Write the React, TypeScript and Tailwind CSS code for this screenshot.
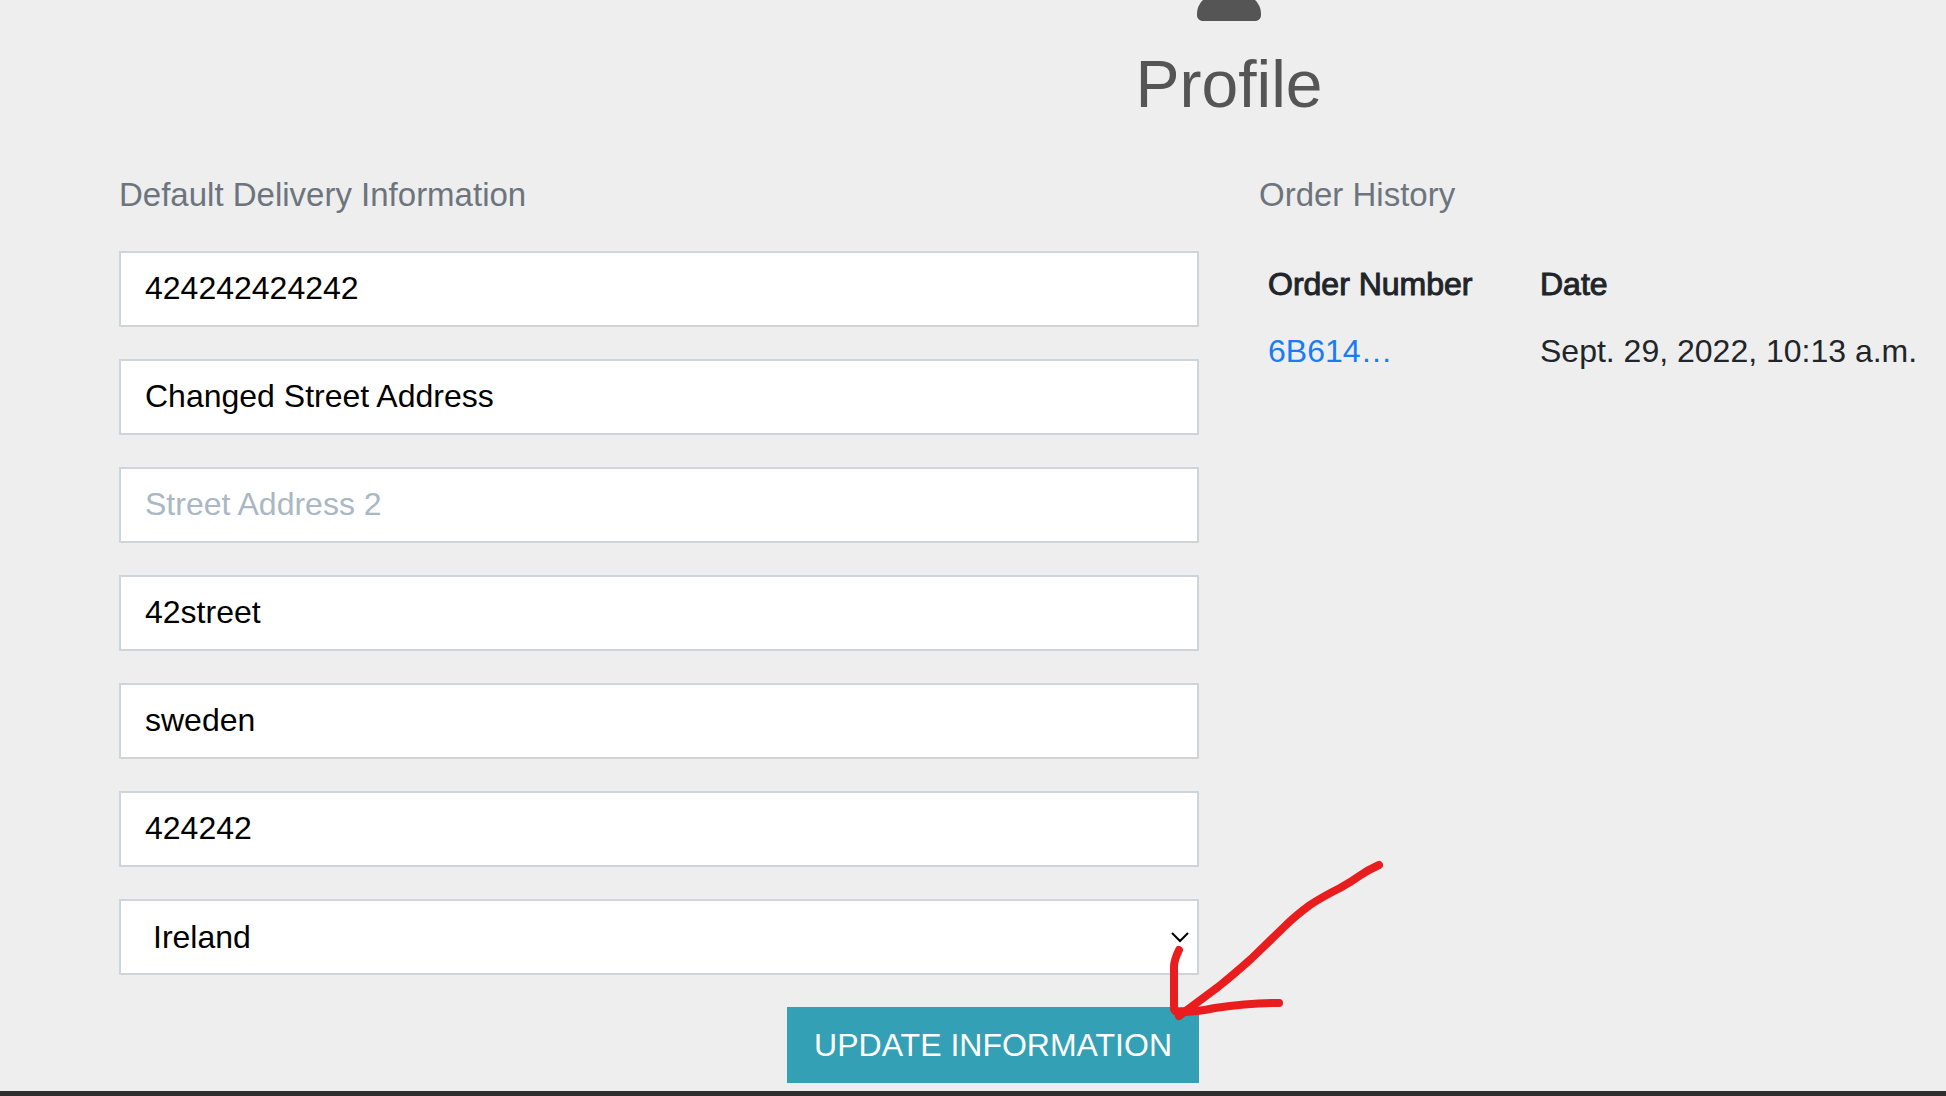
import React from "react";

const fields = [
  { label: "Phone Number", value: "424242424242" },
  { label: "Street Address 1", value: "Changed Street Address" },
  { label: "Street Address 2", value: "" },
  { label: "Town or City", value: "42street" },
  { label: "County", value: "sweden" },
  { label: "Postal Code", value: "424242" },
];

const orders = [{ number: "6B614…", date: "Sept. 29, 2022, 10:13 a.m." }];

function UserIcon() {
  return (
    <svg className="block h-[21px] w-16" viewBox="0 0 64 21" aria-hidden="true">
      <path
        d="M0 14C0 8 2.500 3.500 6 0H58C61.500 3.500 64 8 64 14V15C64 18.500 61.500 21 58 21H6C2.500 21 0 18.500 0 15Z"
        fill="#555555"
      />
    </svg>
  );
}

function Arrow() {
  return (
    <svg
      className="pointer-events-none absolute right-[-200px] bottom-14 h-[180px] w-[240px]"
      viewBox="1159 847 240 180"
      fill="none"
      stroke="#e91d1d"
      strokeWidth="8"
      strokeLinecap="round"
      strokeLinejoin="round"
      aria-hidden="true"
    >
      <path d="M1379 865Q1368 870 1360 875.500Q1351 882 1340 888Q1322 897 1310 905Q1295 916 1284 927L1251 959Q1233 975 1218 987L1179 1016" />
      <path d="M1179 950Q1174 960 1174 967V1009Q1175 1012 1179 1012Q1197 1012 1215 1008Q1249 1003 1279 1003" />
    </svg>
  );
}

function DeliveryForm() {
  return (
    <section>
      <h2 className="text-[33px] leading-[48px] text-[#6c757d]">Default Delivery Information</h2>
      <form className="relative mt-8 flex flex-col gap-8" onSubmit={(e) => e.preventDefault()}>
        {fields.map((f) => (
          <input
            key={f.label}
            type="text"
            aria-label={f.label}
            placeholder={f.label}
            defaultValue={f.value}
            className="h-[76px] w-full border-2 border-[#ced4da] bg-white px-6 pb-0.5 text-[32px] text-black placeholder:text-[#aab7c4]"
          />
        ))}
        <div className="relative">
          <select
            aria-label="Country"
            defaultValue="Ireland"
            className="block h-[76px] w-full appearance-none border-2 border-[#ced4da] bg-white px-8 text-[32px] text-black"
          >
            <option>Ireland</option>
            <option>Sweden</option>
          </select>
          <svg
            className="pointer-events-none absolute top-8 right-2 h-3 w-5"
            viewBox="0 0 20 12"
            fill="none"
            stroke="#000"
            strokeWidth="2"
            aria-hidden="true"
          >
            <path d="M1 2L9 10L17 2" />
          </svg>
        </div>
        <button
          type="submit"
          className="h-[76px] self-end bg-[#33a0b5] px-[27px] text-[32px] text-white uppercase"
        >
          Update Information
        </button>
        <Arrow />
      </form>
    </section>
  );
}

function OrderHistory() {
  return (
    <section>
      <h2 className="text-[33px] leading-[48px] text-[#6c757d]">Order History</h2>
      <table className="mt-8 text-left text-[32px] leading-[47px] text-[#212529]">
        <thead>
          <tr className="[-webkit-text-stroke:1px_#212529]">
            <th className="w-[272px] px-[9px] py-[10px] font-normal">Order Number</th>
            <th className="px-[9px] py-[10px] font-normal">Date</th>
          </tr>
        </thead>
        <tbody>
          {orders.map((o) => (
            <tr key={o.number}>
              <td className="px-[9px] py-[10px]">
                <a href="#order" className="text-[#1a7cf4]">
                  {o.number}
                </a>
              </td>
              <td className="px-[9px] py-[10px] whitespace-nowrap">{o.date}</td>
            </tr>
          ))}
        </tbody>
      </table>
    </section>
  );
}

export default function App() {
  return (
    <div className="flex min-h-screen flex-col overflow-hidden bg-[#eeeeee] font-['Liberation_Sans',Arial,sans-serif]">
      <main className="flex-1 pl-[119px]">
        <div className="w-[calc(100%+393px)]">
          <header className="flex flex-col items-center text-[#555555]">
            <UserIcon />
            <h1 className="mt-6 text-[66px] leading-[78px]">Profile</h1>
          </header>
          <div className="mt-12 grid grid-cols-2 gap-[60px]">
            <DeliveryForm />
            <OrderHistory />
          </div>
        </div>
      </main>
      <footer className="h-[5px] bg-[#2f2f2f]" />
    </div>
  );
}
